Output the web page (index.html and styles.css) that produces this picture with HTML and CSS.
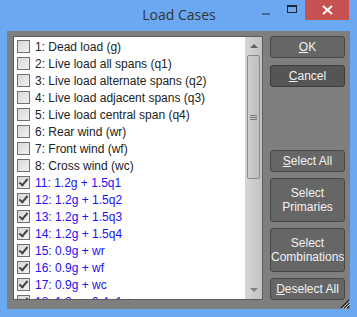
FILE: index.html
```html
<!DOCTYPE html>
<html lang="en">
<head>
    <meta charset="UTF-8">
    <meta name="viewport" content="width=device-width, initial-scale=1.0">
    <title>Load Cases</title>
    <link rel="stylesheet" href="styles.css">
</head>
<body>
    <div class="window">
        <div class="titlebar">
            <span class="title">Load Cases</span>
            <div class="controls">
                <span class="ctl min"><span class="min-bar"></span></span>
                <span class="ctl max"><span class="max-box"></span></span>
                <span class="ctl close">
                    <svg width="11" height="10" viewBox="0 0 11 10">
                        <path d="M1 1 L10 9 M10 1 L1 9" stroke="#fff" stroke-width="2"/>
                    </svg>
                </span>
            </div>
        </div>
        <div class="client">
            <div class="listbox">
                <ul class="items">
                    <li><span class="cb"></span>1: Dead load (g)</li>
                    <li><span class="cb"></span>2: Live load all spans (q1)</li>
                    <li><span class="cb"></span>3: Live load alternate spans (q2)</li>
                    <li><span class="cb"></span>4: Live load adjacent spans (q3)</li>
                    <li><span class="cb"></span>5: Live load central span (q4)</li>
                    <li><span class="cb"></span>6: Rear wind (wr)</li>
                    <li><span class="cb"></span>7: Front wind (wf)</li>
                    <li><span class="cb"></span>8: Cross wind (wc)</li>
                    <li class="combo"><span class="cb checked"></span>11: 1.2g + 1.5q1</li>
                    <li class="combo"><span class="cb checked"></span>12: 1.2g + 1.5q2</li>
                    <li class="combo"><span class="cb checked"></span>13: 1.2g + 1.5q3</li>
                    <li class="combo"><span class="cb checked"></span>14: 1.2g + 1.5q4</li>
                    <li class="combo"><span class="cb checked"></span>15: 0.9g + wr</li>
                    <li class="combo"><span class="cb checked"></span>16: 0.9g + wf</li>
                    <li class="combo"><span class="cb checked"></span>17: 0.9g + wc</li>
                    <li class="combo"><span class="cb checked"></span>18: 1.2g + 0.4q1 + wr</li>
                </ul>
                <div class="scrollbar">
                    <span class="arrow up"></span>
                    <div class="thumb"><span class="grip"></span></div>
                    <div class="track"></div>
                    <span class="arrow down"></span>
                </div>
            </div>
            <div class="buttons">
                <button class="btn"><u>O</u>K</button>
                <button class="btn focus"><u>C</u>ancel</button>
                <div class="spacer"></div>
                <button class="btn"><u>S</u>elect All</button>
                <button class="btn tall">Select<br>Primaries</button>
                <button class="btn tall">Select<br>Combinations</button>
                <button class="btn"><u>D</u>eselect All</button>
            </div>
            <svg class="sizegrip" width="11" height="11" viewBox="0 0 11 11">
                <path d="M10 2 L2 10 M10 5 L5 10 M10 8 L8 10" stroke="#222" stroke-width="1.2"/>
                <path d="M11 3 L3 11 M11 6 L6 11" stroke="#ddd" stroke-width="0.8"/>
            </svg>
        </div>
    </div>
</body>
</html>
```

FILE: styles.css
```css
body {
    margin: 0;
    padding: 0;
    font-family: "Liberation Sans", Arial, sans-serif;
    background-color: #6aa9f1;
}
.window {
    width: 357px;
    height: 317px;
    background-color: #6aa9f1;
    display: flex;
    flex-direction: column;
}
.titlebar {
    height: 31px;
    position: relative;
    display: flex;
    align-items: center;
    justify-content: center;
}
.title {
    font-family: "Open Sans", sans-serif;
    font-size: 14px;
    color: #333;
    margin-top: -2px;
    margin-left: 1px;
}
.controls {
    position: absolute;
    top: 0;
    right: 8px;
    display: flex;
}
.ctl {
    height: 20px;
    display: flex;
    align-items: center;
    justify-content: center;
}
.min {
    width: 26px;
}
.min-bar {
    width: 8px;
    height: 2px;
    background-color: #4a6b94;
    margin-top: 7px;
}
.max {
    width: 26px;
}
.max-box {
    width: 8px;
    height: 5px;
    border: 1px solid #1f2733;
    border-top-width: 2px;
    margin-top: -2px;
}
.close {
    width: 44px;
    background-color: #c75050;
}
.client {
    position: relative;
    flex: 1;
    margin: 0 7px 8px 7px;
    background-color: #7f7f7f;
    padding: 5px 5px 9px 6px;
    display: flex;
    gap: 7px;
}
.listbox {
    width: 248px;
    height: 262px;
    border: 1px solid #5c5c5c;
    background-color: #fff;
    display: flex;
    overflow: hidden;
}
.items {
    list-style: none;
    margin: 0;
    padding: 1px 0 0 3px;
    flex: 1;
    overflow: hidden;
}
.items li {
    height: 17px;
    display: flex;
    align-items: center;
    font-size: 12px;
    color: #222;
    white-space: nowrap;
}
.items li.combo {
    color: #1e10f0;
}
.cb {
    width: 11px;
    height: 11px;
    border: 1px solid #707070;
    background: linear-gradient(135deg, #d6d6d6, #f2f2f2);
    margin-right: 5px;
    position: relative;
    flex-shrink: 0;
}
.cb.checked::after {
    content: "";
    position: absolute;
    left: 3px;
    top: 0px;
    width: 3px;
    height: 7px;
    border-right: 2px solid #444;
    border-bottom: 2px solid #444;
    transform: rotate(40deg);
}
.scrollbar {
    width: 17px;
    background: linear-gradient(90deg, #d6d6d6, #c2c2c2);
    display: flex;
    flex-direction: column;
    align-items: center;
}
.arrow {
    width: 0;
    height: 0;
    border-left: 4px solid transparent;
    border-right: 4px solid transparent;
}
.arrow.up {
    border-bottom: 4px solid #606060;
    margin: 7px 0 7px;
}
.arrow.down {
    border-top: 4px solid #808080;
    margin: 7px 0 7px;
}
.thumb {
    width: 13px;
    height: 124px;
    border: 1px solid #8a8a8a;
    border-radius: 2px;
    background: linear-gradient(90deg, #cfcfcf, #bdbdbd);
    display: flex;
    align-items: center;
    justify-content: center;
    box-sizing: border-box;
}
.grip {
    width: 7px;
    height: 5px;
    border-top: 1px solid #777;
    border-bottom: 1px solid #777;
    position: relative;
    box-sizing: border-box;
    background: linear-gradient(#777, #777) center / 7px 1px no-repeat;
}
.track {
    flex: 1;
}
.buttons {
    width: 75px;
    display: flex;
    flex-direction: column;
    gap: 6px;
}
.btn {
    height: 22px;
    border: 1px solid #474747;
    border-radius: 3px;
    background-color: #666;
    color: #f2f2f2;
    font-family: "Liberation Sans", Arial, sans-serif;
    font-size: 12px;
    padding: 0;
    line-height: 14px;
    text-align: center;
}
.btn:nth-child(2) {
    margin-top: 1px;
}
.btn.focus {
    background-color: #555;
    border-color: #3c3c3c;
}
.btn.tall {
    height: 44px;
}
.spacer {
    flex: 1;
}
.sizegrip {
    position: absolute;
    right: 0;
    bottom: 0;
}
```
